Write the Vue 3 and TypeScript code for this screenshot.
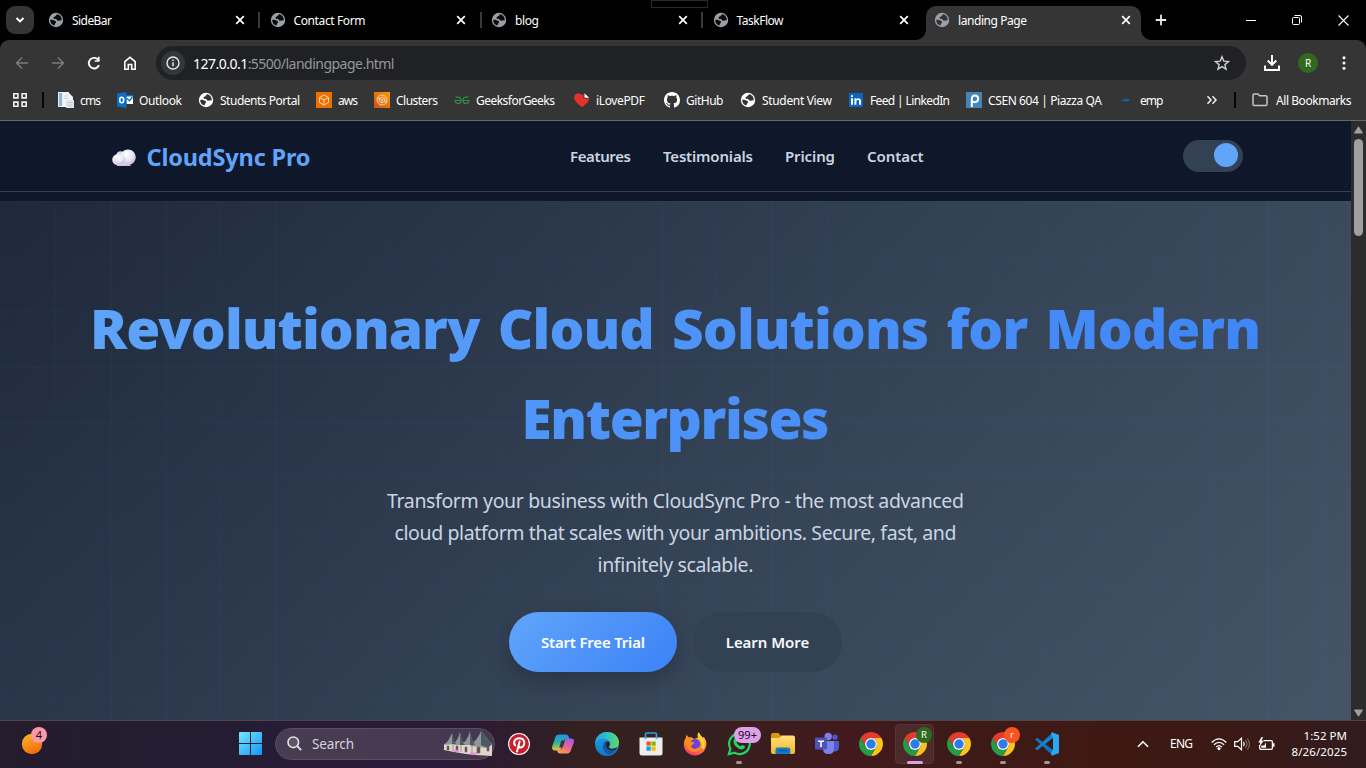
<script setup lang="ts">
import type { ObjectDirective } from 'vue'

// Spreads or tightens a label's tracking so it fills the given width.
const vFit: ObjectDirective<HTMLElement, number> = {
  mounted(el, { value }) {
    const count = (el.textContent ?? '').trim().length
    const natural = el.getBoundingClientRect().width
    const tracking = (value - natural) / Math.max(count - 1, 1)
    el.style.letterSpacing = `${tracking}px`
    el.style.marginRight = `${-tracking}px`
  },
}

interface Tab { title: string; width: number; active?: boolean }
interface Bookmark { label: string; icon: string; width: number }
interface App { name: string; icon: string; badge?: string; tone?: string; state?: string }

const tabs: Tab[] = [
  { title: 'SideBar', width: 40 },
  { title: 'Contact Form', width: 72 },
  { title: 'blog', width: 24 },
  { title: 'TaskFlow', width: 47 },
  { title: 'landing Page', width: 69, active: true },
]

const bookmarks: Bookmark[] = [
  { label: 'cms', icon: 'doc', width: 21 },
  { label: 'Outlook', icon: 'outlook', width: 43 },
  { label: 'Students Portal', icon: 'globe', width: 80 },
  { label: 'aws', icon: 'aws', width: 20 },
  { label: 'Clusters', icon: 'clusters', width: 42 },
  { label: 'GeeksforGeeks', icon: 'gfg', width: 79 },
  { label: 'iLovePDF', icon: 'heart', width: 49 },
  { label: 'GitHub', icon: 'github', width: 37.5 },
  { label: 'Student View', icon: 'globe', width: 70 },
  { label: 'Feed | LinkedIn', icon: 'linkedin', width: 80 },
  { label: 'CSEN 604 | Piazza QA', icon: 'piazza', width: 114 },
  { label: 'emp', icon: 'emp', width: 23.5 },
]

const links = [
  { label: 'Features', width: 61 },
  { label: 'Testimonials', width: 90 },
  { label: 'Pricing', width: 50 },
  { label: 'Contact', width: 56.5 },
]

const apps: App[] = [
  { name: 'Pinterest', icon: 'pinterest' },
  { name: 'Copilot', icon: 'copilot' },
  { name: 'Edge', icon: 'edge' },
  { name: 'Store', icon: 'store' },
  { name: 'Firefox', icon: 'firefox' },
  { name: 'WhatsApp', icon: 'whatsapp', badge: '99+', tone: 'count', state: 'open' },
  { name: 'Explorer', icon: 'explorer' },
  { name: 'Teams', icon: 'teams' },
  { name: 'Chrome', icon: 'chrome' },
  { name: 'Chrome R', icon: 'chrome', badge: 'R', tone: 'green', state: 'focused' },
  { name: 'Chrome 2', icon: 'chrome', state: 'open' },
  { name: 'Chrome r', icon: 'chrome', badge: 'r', tone: 'orange', state: 'open' },
  { name: 'VS Code', icon: 'vscode', state: 'open' },
]

const globeShape = (land: string, sea: string) =>
  `<svg viewBox="0 0 16 16"><circle cx="8" cy="8" r="7.2" fill="${land}"/><path fill="${sea}" d="M9.2 2.3C8 2.7 8.3 4 7 4.4 5.6 4.8 5.3 5.5 5.8 6.4 6.4 7.2 7.5 6.6 8.3 7.2 9 7.7 9 8.6 10 8.8 11 9 12 8.2 13.8 8.4 14 5.4 12 2.7 9.2 2.3zM2.2 7.8C3.8 7.3 5.6 8 7 8.8 8.3 9.5 8.4 10.6 7.4 11.2 6.7 11.6 7 12.6 6.4 13.5 3.8 12.8 2 10.6 2.2 7.8z"/></svg>`

const icons: Record<string, string> = {
  tabGlobe: globeShape('#9aa0a6', '#0b0b0b'),
  tabGlobeActive: globeShape('#9aa0a6', '#333'),
  globe: globeShape('#fff', '#333'),
  doc: '<svg viewBox="0 0 16 16"><path d="M0 0h11v15H0z" fill="#e8eef2"/><path d="M1 1h3v13H1z" fill="#8fb8d8"/><path d="M5 1h6l4 4v10H5z" fill="#f4f4f4"/><path d="M8 8h8v8H8z" fill="#dfe3ec"/><path d="M9.500 10.500h5M9.500 13h5M6 4h4M6 6.500h4" stroke="#c8ced8" fill="none"/></svg>',
  outlook: '<svg viewBox="0 0 16 16"><path d="M8 3h8v9H8z" fill="#0a6fc2"/><path d="M9.500 4.500h6.500v7.500H9.500z" fill="#fff"/><path d="M10 6.500l2.500 2.200L15.500 5" stroke="#0a6fc2" stroke-width="1.400" fill="none"/><path d="M0 1.500L9.500 0v16L0 14.500z" fill="#0a6fc2"/><ellipse cx="4.700" cy="8" rx="2" ry="2.700" fill="none" stroke="#fff" stroke-width="1.600"/></svg>',
  aws: '<svg viewBox="0 0 16 16"><path fill="#ed7100" d="M0 0h16v16H0z"/><path d="M8 3l4.500 2.500v5L8 13l-4.500-2.500v-5zM3.500 5.500L8 8l4.500-2.500M8 8v5" fill="none" stroke="#ffe2c5" stroke-width=".9"/></svg>',
  clusters: '<svg viewBox="0 0 16 16"><path fill="url(#clusterFill)" d="M0 0h16v16H0z"/><g fill="none" stroke="#ffe2c5" stroke-width=".9"><circle cx="8" cy="8" r="5"/><path d="M8 5l2.700 1.500v3L8 11 5.300 9.500v-3zM5.300 6.500L8 8l2.700-1.500M8 8v3M3.500 5.500l1.500 1M12.500 10.500L11 9.500"/></g></svg>',
  gfg: '<svg viewBox="0 0 16 16"><g fill="none" stroke="#2f8d46" stroke-width="1.200"><path d="M1.500 5.200h2.700c2.200 0 2.800 1.500 2.800 3 0 2-1.300 3.300-3 3.300-1.600 0-2.800-1.200-2.800-3h6.300M14.500 5.200h-2.700c-2.200 0-2.800 1.500-2.800 3 0 2 1.300 3.300 3 3.300 1.600 0 2.800-1.200 2.800-3H8"/></g></svg>',
  heart: '<svg viewBox="0 0 16 16"><path fill="#e5322d" d="M8 15.300C3 11.500.2 8.500.2 5.300.2 1.500 5.300 0 8 3.300L9.500 1.800V6.500h5.900C14.800 9.500 12 12.300 8 15.300z"/><path fill="#fff" d="M10.500 1.200l4.700 4.500h-4.700z"/></svg>',
  github: '<svg viewBox="0 0 16 16"><path fill="#fff" d="M8 0C3.580 0 0 3.580 0 8c0 3.540 2.290 6.530 5.470 7.590.4.070.55-.17.55-.38 0-.19-.01-.82-.01-1.490-2.010.37-2.530-.49-2.690-.94-.09-.23-.48-.94-.82-1.130-.28-.15-.68-.52-.01-.53.63-.01 1.080.58 1.230.82.72 1.210 1.870.87 2.330.66.07-.52.28-.87.51-1.070-1.780-.2-3.640-.89-3.640-3.950 0-.87.31-1.590.82-2.150-.08-.2-.36-1.020.08-2.120 0 0 .67-.21 2.200.82.64-.18 1.320-.27 2-.27s1.360.09 2 .27c1.530-1.040 2.200-.82 2.200-.82.44 1.100.16 1.920.08 2.120.51.56.82 1.270.82 2.150 0 3.070-1.870 3.750-3.650 3.950.29.25.54.73.54 1.480 0 1.070-.01 1.930-.01 2.200 0 .21.15.46.55.38A8 8 0 0 0 16 8c0-4.420-3.580-8-8-8z"/></svg>',
  linkedin: '<svg viewBox="0 0 16 16"><rect x="1" y="1" width="14" height="14" rx="1" fill="#0a66c2"/><path fill="#fff" d="M3 6.300h2v6.500H3zM3 3.200h2v1.900H3zM6.400 6.300h1.900v1c.9-1.600 4.700-1.700 4.700 1.600v3.900h-2V9.400c0-2-2.600-1.800-2.600 0v3.400h-2z"/></svg>',
  piazza: '<svg viewBox="0 0 16 16"><path fill="#4684b5" d="M0 0h16v16H0z"/><path d="M5.800 15V6.700c0-4.500 6.400-4 6.400 0s-5 4-6.200 2.400" fill="none" stroke="#fff" stroke-width="2"/></svg>',
  emp: '<svg viewBox="0 0 16 16"><path d="M4.500 7.300q3.500-1.500 7 0v1.700q-3.500 1-7 0z" fill="#1b4f80"/><path d="M5 8.300h6" stroke="#1a7fb5" stroke-width=".8"/></svg>',
  chrome: '<svg viewBox="0 0 24 24"><path fill="#e33b2e" d="M1.610 6A12 12 0 0 1 22.390 6L12 6A6 6 0 0 0 6.800 15Z"/><path fill="#fcc31e" transform="rotate(120 12 12)" d="M1.610 6A12 12 0 0 1 22.390 6L12 6A6 6 0 0 0 6.800 15Z"/><path fill="#259b48" transform="rotate(240 12 12)" d="M1.610 6A12 12 0 0 1 22.390 6L12 6A6 6 0 0 0 6.800 15Z"/><circle cx="12" cy="12" r="6" fill="#fff"/><circle cx="12" cy="12" r="4.700" fill="#2b7bea"/></svg>',
  pinterest: '<svg viewBox="0 0 24 24"><circle cx="12" cy="12" r="11" fill="#fff"/><circle cx="12" cy="12" r="9.900" fill="#c8202a"/><path d="M8.200 13.500C5.800 10.500 7.800 6.300 12.300 6.300c4.800 0 6 4.300 4.300 7.300-1.400 2.400-4.200 2.300-4.900.6M12.600 9.500L10 19.500" fill="none" stroke="#fff" stroke-width="2" stroke-linecap="round"/></svg>',
  copilot: '<svg viewBox="0 0 24 24"><path fill="url(#copA)" d="M8.500 2.500h6.300c1.600 0 2.600 1 3 2.500l.7 2h-2.500c-2 0-2.900 1-3.500 3l-2 6c-.5 1.700-1.600 2.500-3.200 2.500H4C1.500 18.500.5 17 1.200 14.600l3-9c.6-2 2-3.100 4.300-3.100z"/><path fill="url(#copB)" d="M15.500 21.500H9.200c-1.600 0-2.600-.8-3-2.500l-.4-1h2c2 0 3-1 3.600-3l2-6c.5-1.600 1.500-2.500 3.200-2.500H20c2.500 0 3.500 1.500 2.800 3.900l-3 8c-.6 2-2 3.100-4.300 3.100z"/><path fill="#33252b" d="M10.400 8.500h3.500l-2.300 7H8.200z" opacity=".85"/></svg>',
  edge: '<svg viewBox="0 0 24 24"><circle cx="12" cy="12" r="12" fill="url(#edgeB)"/><path fill="url(#edgeG)" d="M0 11C.8 4.500 5.800 0 12.200 0 19 0 24 4.800 24 10.600c0 3.700-2.700 6-5.900 6-2.400 0-4.100-.9-4.100-1.700 0-.5 1-1 1-3 0-3.100-3.100-5.300-6.700-5.300C4.500 6.600 1.500 8.500 0 11z"/><path fill="#0d5ba9" d="M8 14.500c0-3.200 2-5.200 4-5.700-2.200 2-1.500 8.300 4.500 8.900 2.400.2 4.300-.4 5.600-1.200C19.700 21 16 23 13.200 22.600 10 21.500 8 18 8 14.500z"/><path fill="#342421" d="M12.500 9c2 .3 2.700 1.700 2.500 3.200-.2 1.600-1.400 2.300-1 3.300.8 1.500 3.800 1.900 6.500.6 1.300-.5 1.900-.2 1.200.7-1 1.300-3.600 1.700-5.200 1.600-5.300-.2-7.600-6.600-4-9.400z"/></svg>',
  store: '<svg viewBox="0 0 24 24"><path d="M6.500 7V2.500Q6.500 1 8 1h8q1.500 0 1.500 1.500V7" fill="none" stroke="#22a5e8" stroke-width="1.700"/><path fill="#eeeeef" d="M.5 5.500h23V21q0 2.500-2.500 2.500H3Q.5 23.500.5 21z"/><path fill="#22a5e8" d="M5.700 5.500h1.700V7H5.700zM16.700 5.500h1.700V7h-1.700z"/><path fill="#f25022" d="M7.500 9.500h4.200v4.200H7.500z"/><path fill="#7fba00" d="M12.500 9.500h4.200v4.200h-4.200z"/><path fill="#00a4ef" d="M7.500 14.500h4.200v4.200H7.500z"/><path fill="#ffb900" d="M12.500 14.500h4.200v4.200h-4.200z"/></svg>',
  firefox: '<svg viewBox="0 0 24 24"><path fill="url(#foxA)" d="M3.500 2.700l2 2.500h3L11 7l4-1.500C14 3.500 14.500 1.500 16 .3c.8 2.700 2.500 3.700 4 5.700l.8-1.300C23 8 23.700 10.800 23.300 13.500 22.500 19.300 17.700 23.500 12 23.500 5.500 23.500.6 18.500.8 12 .9 9.600 1.700 7.300 2.700 6z"/><circle cx="12.300" cy="12" r="5" fill="#6f42d7"/><path fill="#ff8b1d" d="M2 8.500C4 5.500 7 5 9.500 7.500c-1.400.5-2 1.300-1.800 2.200l3.800.7c-.4 1.500-2.200 1.600-3.100 3.100-1 2 1 4.100 3.500 3.500C14 16.500 15 15 17 16c-1.500 4.500-9 5.200-12.500.5C2.700 14 1.800 11.300 2 8.500z"/><path d="M17 5.500q5 5 2.500 11" fill="none" stroke="#ffd43c" stroke-width="2.600"/></svg>',
  whatsapp: '<svg viewBox="0 0 24 24"><path d="M1.800 22.300l1.600-5.600A10.300 10.300 0 1 1 7.500 20.800z" fill="none" stroke="#22d366" stroke-width="2.200"/><path fill="#22d366" d="M8.200 6.200c.6-.3 1.200-.2 1.500.4l.9 2.100c.1.700-.7 1.300-1 1.700.9 1.900 2.200 3 4.100 3.800.6-.4 1-1.400 1.600-1.300l2.300 1.100c.8.500.1 2-.5 2.600-1.600 1.300-3.600.8-5.500-.2-2.400-1.300-4.300-3.400-5-5.700-.5-1.800.2-3.800 1.600-4.500z"/></svg>',
  explorer: '<svg viewBox="0 0 24 24"><path fill="#d99a05" d="M0 3q0-2 2-2h5.500l2 2.500V7H0z"/><path fill="url(#folder)" d="M0 6h8l2.500-2.500H22q2 0 2 2V20q0 2-2 2H2q-2 0-2-2z"/><path fill="#117bc9" d="M4.500 22v-4.500q0-2 2-2h10.800q2 0 2 2V22z"/><path d="M8 18.500h8" stroke="#075493" stroke-width="1.200"/></svg>',
  teams: '<svg viewBox="0 0 24 24"><circle cx="20" cy="5.200" r="2.600" fill="#5059c9"/><path fill="#5059c9" d="M16 9h7q1 0 1 1v5q0 4-4 4.500h-3z"/><circle cx="13.200" cy="4.500" r="3.700" fill="#7b83eb"/><path fill="#7b83eb" d="M8 9h11v7.500q0 5.500-5.500 5.500T8 16.500z"/><rect x="0" y="5.500" width="12" height="12" rx="1" fill="#4b53bc"/><path fill="#fff" d="M3 8.500h6v1.400H6.800v5H5.200v-5H3z"/></svg>',
  vscode: '<svg viewBox="0 0 24 24"><path fill="#0878c4" d="M0 7.200l2.300-1.500L18 18v5.700z"/><path fill="#147fca" d="M0 16.700l2.300 1.500L18 6V.3z"/><path fill="#2aa9f2" d="M17 .2L24 3v18l-7 2.800-1-1.500 2-5.300V6.500l-2-5z"/></svg>',
}
</script>

<template>
  <div class="desktop">
    <svg class="defs" width="0" height="0">
      <defs>
        <linearGradient id="clusterFill" x1="0" y1="1" x2="1" y2="0"><stop stop-color="#c8511b" /><stop offset="1" stop-color="#ff9900" /></linearGradient>
        <linearGradient id="copA" x1="0" y1="0" x2="0" y2="1"><stop stop-color="#1f93e8" /><stop offset=".5" stop-color="#2cb0a3" /><stop offset="1" stop-color="#e5c62a" /></linearGradient>
        <linearGradient id="copB" x1=".7" y1="0" x2=".3" y2="1"><stop stop-color="#9a5df0" /><stop offset=".5" stop-color="#ea618f" /><stop offset="1" stop-color="#ff9a55" /></linearGradient>
        <linearGradient id="edgeB" x1="0" y1="0" x2="0" y2="1"><stop stop-color="#1ca4dc" /><stop offset="1" stop-color="#1377cf" /></linearGradient>
        <linearGradient id="edgeG"><stop stop-color="#22a3e4" /><stop offset=".5" stop-color="#2fc1c8" /><stop offset="1" stop-color="#62d95c" /></linearGradient>
        <linearGradient id="foxA" x1=".8" y1="0" x2=".3" y2="1"><stop stop-color="#fff04a" /><stop offset=".4" stop-color="#ff9b22" /><stop offset="1" stop-color="#f7366b" /></linearGradient>
        <linearGradient id="folder" x1="0" y1="0" x2="0" y2="1"><stop stop-color="#ffe07a" /><stop offset="1" stop-color="#f5b92e" /></linearGradient>
        <linearGradient id="winA" x1="0" y1="0" x2="1" y2="1"><stop stop-color="#74e8fb" /><stop offset="1" stop-color="#1494f6" /></linearGradient>
        <radialGradient id="puff" cx=".4" cy=".3" r=".75"><stop stop-color="#ffffff" /><stop offset=".55" stop-color="#e9e6f2" /><stop offset="1" stop-color="#bdb3dc" /></radialGradient>
        <linearGradient id="orb" x1=".2" y1="0" x2=".6" y2="1"><stop stop-color="#f9b529" /><stop offset="1" stop-color="#f3690f" /></linearGradient>
      </defs>
    </svg>

    <section class="tabstrip">
      <span class="snap-handle"></span>
      <button class="tab-search">
        <svg width="10" height="8" viewBox="0 0 10 8"><path d="M1.500 2L5 5.500 8.500 2" fill="none" stroke="#fff" stroke-width="1.900" /></svg>
      </button>
      <div class="tabs">
        <div v-for="(tab, i) in tabs" :key="tab.title" class="tab" :class="{ active: tab.active, divided: i < 3 }">
          <span class="ico" v-html="tab.active ? icons.tabGlobeActive : icons.tabGlobe"></span>
          <span class="tab-title"><span v-fit="tab.width" class="label">{{ tab.title }}</span></span>
          <svg class="tab-close" width="10" height="10" viewBox="0 0 10 10"><path d="M1.200 1.200l7.600 7.600M8.800 1.200L1.200 8.800" stroke="#fff" stroke-width="1.700" /></svg>
        </div>
      </div>
      <svg class="plus" width="12" height="12" viewBox="0 0 12 12"><path d="M6 .8v10.400M.8 6h10.400" stroke="#e8e8e8" stroke-width="1.800" /></svg>
      <div class="window-controls">
        <svg width="10" height="10" viewBox="0 0 10 10"><path d="M0 5h10" stroke="#fff" shape-rendering="crispEdges" /></svg>
        <svg width="10" height="10" viewBox="0 0 10 10"><rect x=".5" y="2.500" width="7" height="7" rx="1" fill="none" stroke="#fff" /><path d="M2.500.5H8Q9.500.5 9.500 2v5.500" fill="none" stroke="#fff" /></svg>
        <svg width="11" height="11" viewBox="0 0 11 11"><path d="M.5.5l10 10M10.500.5l-10 10" stroke="#fff" stroke-width="1.100" /></svg>
      </div>
    </section>

    <section class="toolbar">
      <div class="address-row">
        <div class="nav-buttons">
          <svg width="14" height="14" viewBox="0 0 14 14"><path d="M13 7H1.800M7 1.500L1.500 7 7 12.500" fill="none" stroke="#7c7c7c" stroke-width="1.500" /></svg>
          <svg width="14" height="14" viewBox="0 0 14 14"><path d="M1 7h11.200M7 1.500L12.500 7 7 12.500" fill="none" stroke="#7c7c7c" stroke-width="1.500" /></svg>
          <svg width="14" height="14" viewBox="0 0 14 14"><path d="M12 9.200A5.300 5.300 0 1 1 11.500 4.200" fill="none" stroke="#fff" stroke-width="1.900" /><path d="M12.600.8v5H7.700V4.200h3.200V.8z" fill="#fff" /></svg>
          <svg width="14" height="14" viewBox="0 0 14 14"><path d="M1.800 13.200V5.600L7 1.300l5.200 4.300v7.600H8.700V8.500H5.300v4.700z" fill="none" stroke="#fff" stroke-width="1.600" /></svg>
        </div>
        <div class="omnibox">
          <span class="site-info">
            <svg width="14" height="14" viewBox="0 0 14 14"><circle cx="7" cy="7" r="6" fill="none" stroke="#e8e8e8" stroke-width="1.400" /><path d="M7 6.200v4M7 3.600v1.500" stroke="#e8e8e8" stroke-width="1.500" /></svg>
          </span>
          <span class="url"><span v-fit="201.500" class="label"><b>127.0.0.1</b>:5500/landingpage.html</span></span>
          <svg class="star" width="16" height="16" viewBox="0 0 16 16"><path d="M8 1.700l1.800 4.400 4.700.4-3.600 3.100 1.100 4.600L8 11.700l-4 2.500 1.100-4.600L1.500 6.500l4.700-.4z" fill="none" stroke="#d0d0d0" stroke-width="1.400" /></svg>
        </div>
        <div class="tools">
          <svg width="16" height="16" viewBox="0 0 16 16"><path d="M8 0v9.500M3.700 5.500L8 9.800l4.300-4.300M1 10.500V15h14v-4.500" fill="none" stroke="#fff" stroke-width="1.900" /></svg>
          <span class="avatar">R</span>
          <svg width="4" height="14" viewBox="0 0 4 14"><g fill="#fff"><circle cx="2" cy="1.800" r="1.500" /><circle cx="2" cy="7" r="1.500" /><circle cx="2" cy="12.200" r="1.500" /></g></svg>
        </div>
      </div>

      <div class="bookmark-bar">
        <svg class="apps-grid" width="14" height="14" viewBox="0 0 14 14"><path d="M.8.8h4.100v4.100H.8zM9.100.8h4.100v4.100H9.100zM.8 9.100h4.100v4.100H.8zM9.100 9.100h4.100v4.100H9.100z" fill="none" stroke="#eee" stroke-width="1.600" /></svg>
        <i class="rule"></i>
        <div class="bookmarks">
          <div v-for="b in bookmarks" :key="b.label" class="bookmark">
            <span class="ico" v-html="icons[b.icon]"></span>
            <span v-fit="b.width" class="label">{{ b.label }}</span>
          </div>
        </div>
        <svg class="more" width="12" height="10" viewBox="0 0 12 10"><path d="M1.500 1.200L5 5 1.500 8.800M6.500 1.200L10 5 6.500 8.800" fill="none" stroke="#eee" stroke-width="1.500" /></svg>
        <i class="rule"></i>
        <svg class="folder" width="16" height="14" viewBox="0 0 16 14"><path d="M1 11.200V2.300q0-1.300 1.300-1.300H6l1.700 1.800h6q1.300 0 1.300 1.300v7.100q0 1.300-1.300 1.300H2.300Q1 12.500 1 11.200z" fill="none" stroke="#c6c6c6" stroke-width="1.500" /></svg>
        <span v-fit="75.500" class="label">All Bookmarks</span>
      </div>
    </section>

    <div class="viewport">
      <main class="page">
        <header class="site-header">
          <div class="brand">
            <svg width="24" height="17" viewBox="0 0 24 17"><path d="M5 16.200h13.500" stroke="#c9bfe6" stroke-width="1.600" /><circle cx="8.500" cy="6.500" r="4.300" fill="#dedbe5" /><ellipse cx="6" cy="10.700" rx="5.800" ry="5.600" fill="url(#puff)" /><rect x="5" y="7" width="14" height="9" rx="4" fill="#dcd6ee" /><circle cx="16" cy="8.200" r="7.800" fill="url(#puff)" /><ellipse cx="8" cy="10.500" rx="5" ry="4.800" fill="url(#puff)" /></svg>
            <span v-fit="164" class="label">CloudSync Pro</span>
          </div>
          <nav class="links">
            <a v-for="l in links" :key="l.label" v-fit="l.width" class="label">{{ l.label }}</a>
          </nav>
          <div class="theme-toggle"><span></span></div>
        </header>
        <section class="hero">
          <h1>
            <span v-fit="1171" class="label">Revolutionary Cloud Solutions for Modern</span><br />
            <span v-fit="308" class="label">Enterprises</span>
          </h1>
          <p>
            <span v-fit="577" class="label">Transform your business with CloudSync Pro - the most advanced</span><br />
            <span v-fit="562" class="label">cloud platform that scales with your ambitions. Secure, fast, and</span><br />
            <span v-fit="156" class="label">infinitely scalable.</span>
          </p>
          <div class="actions">
            <button class="primary"><span v-fit="104" class="label">Start Free Trial</span></button>
            <button class="secondary"><span v-fit="83.500" class="label">Learn More</span></button>
          </div>
        </section>
      </main>
      <aside class="scrollbar">
        <svg width="9" height="8" viewBox="0 0 9 8"><path d="M4.500.8L8.500 7H.5z" fill="#9f9f9f" stroke="#9f9f9f" stroke-linejoin="round" /></svg>
        <span class="thumb"></span>
        <svg class="down" width="9" height="8" viewBox="0 0 9 8"><path d="M4.500 7.200L8.500 1H.5z" fill="#9f9f9f" stroke="#9f9f9f" stroke-linejoin="round" /></svg>
      </aside>
    </div>

    <footer class="taskbar">
      <div class="widget"><svg width="22" height="22" viewBox="0 0 22 22"><circle cx="11" cy="11" r="10.200" fill="url(#orb)" /></svg><span class="widget-badge">4</span></div>
      <svg class="start" width="23" height="23" viewBox="0 0 23 23"><path fill="url(#winA)" d="M1 0h10v11H0V1q0-1 1-1zM12 0h10q1 0 1 1v10H12zM0 12h11v11H1q-1 0-1-1zM12 12h11v10q0 1-1 1H12z" /></svg>
      <div class="search">
        <svg width="15" height="15" viewBox="0 0 15 15"><circle cx="6.300" cy="6.300" r="5.300" fill="#5f5661" stroke="#e6e2e6" stroke-width="1.600" /><path d="M10.200 10.200l4 4" stroke="#e6e2e6" stroke-width="1.900" /></svg>
        <span v-fit="42" class="label">Search</span>
        <svg class="trulli" width="48" height="26" viewBox="0 0 48 26">
          <path fill="#e2d5ca" d="M0 13l10-2h10l12 1 16 0v13l-16-1-10-1-12-2-10-2z" />
          <path d="M0 14Q5 10 8 2q1 7 4 11zM9 14q5-5 7-13 1 8 5 13zM18 14q6-6 8-14 1 8 5 14zM26 15Q34 8 37 0q3 3 11 13l-4 4z" fill="#8b979c" />
          <path d="M8 2q1 7 4 11H8zM16 1q1 8 5 13h-5zM26 0q1 8 5 14h-5zM37 0q3 3 11 13l-4 4-7-3z" fill="#4b5960" />
          <path d="M3 15h2v4H3zM12 15h2v4h-2zM21 16h2v5h-2zM33 16h3v6h-3zM43 16h2v4h-2zM9 14v6M17 14v7M28 14v9" stroke="#7d6a70" stroke-width=".6" fill="#5b4e55" />
          <path d="M10 20h5M26 22.500h7" stroke="#e78ed8" stroke-width="2.200" />
        </svg>
      </div>
      <div class="apps">
        <div v-for="app in apps" :key="app.name" class="app" :class="app.state">
          <span class="app-ico" v-html="icons[app.icon]"></span>
          <span v-if="app.badge" class="badge" :class="app.tone">{{ app.badge }}</span>
          <i v-if="app.state" class="indicator"></i>
        </div>
      </div>
      <div class="tray">
        <svg class="caret" width="12" height="8" viewBox="0 0 12 8"><path d="M1 6.800L6 1.800l5 5" fill="none" stroke="#fff" stroke-width="1.600" /></svg>
        <span v-fit="23" class="label lang">ENG</span>
        <svg class="wifi" width="16" height="14" viewBox="0 0 16 14"><g fill="none" stroke="#fff" stroke-width="1.300"><path d="M.7 5.500q7.300-7.200 14.600 0M2.900 7.800q5.100-4.900 10.200 0M5.100 10q2.900-2.700 5.800 0" /></g><circle cx="8" cy="11.600" r="1.600" fill="#fff" /></svg>
        <svg class="sound" width="17" height="14" viewBox="0 0 17 14"><path d="M.7 4.700h3L7.500 1.200v11.600L3.700 9.300h-3z" fill="none" stroke="#fff" stroke-width="1.200" /><path d="M9.500 4.800q1.500 2.200 0 4.400" fill="none" stroke="#fff" stroke-width="1.200" /><path d="M11.400 3.200q3 3.800 0 7.600M13.300 1.500q4.400 5.500 0 11" fill="none" stroke="#826562" stroke-width="1.200" /></svg>
        <svg class="battery" width="17" height="14" viewBox="0 0 17 14"><path d="M5.500 3.600H13q1.400 0 1.400 1.400v6q0 1.400-1.400 1.400H3Q1.600 12.400 1.600 11V8" fill="none" stroke="#fff" stroke-width="1.300" /><path d="M15 6.300h1.500v3.500H15zM3.300 8.500h3L8 5.300v5.500H3.300zM3.500 0L.3 5.500h2L1.500 9.500 5.700 3.800H3.600L5 0z" fill="#fff" /></svg>
        <div class="clock"><span v-fit="43.500" class="label">1:52 PM</span><span v-fit="55.500" class="label">8/26/2025</span></div>
      </div>
    </footer>
  </div>
</template>

<style>
html, body { margin: 0; overflow: hidden; background: #000; }
</style>

<style scoped>
* { box-sizing: border-box; }
.desktop { width: 1366px; height: 768px; display: flex; flex-direction: column; overflow: hidden; background: #000; color: #fff; font-family: "Noto Sans", "Open Sans", sans-serif; font-size: 12px; }
.defs { position: absolute; }
.label { display: inline-block; white-space: nowrap; }
svg { display: block; flex: none; }
button { border: 0; padding: 0; font: inherit; color: inherit; }
.ico { width: 16px; height: 16px; flex: none; }
.ico :deep(svg), .app-ico :deep(svg) { display: block; width: 100%; height: 100%; }

.tabstrip { height: 40px; flex: none; display: flex; align-items: center; padding-left: 6px; position: relative; }
.snap-handle { position: absolute; left: 651px; top: 0; width: 57px; height: 8px; border: 1px solid #2a2a2a; }
.tab-search { width: 28px; height: 28px; border-radius: 9px; background: #353535; display: grid; place-items: center; margin-right: 6px; }
.tabs { display: flex; align-self: flex-end; gap: 6.5px; }
.tab { width: 215px; height: 34px; padding: 0 10.500px 6px 8px; display: flex; align-items: center; position: relative; }
.tab-title { margin-left: 8px; flex: 1; }
.divided::after { content: ""; position: absolute; right: -5px; top: 6px; width: 2px; height: 16px; background: #3a3a3a; }
.tab.active { background: #353535; border-radius: 10px 10px 0 0; }
.tab.active::before, .tab.active::after { content: ""; position: absolute; bottom: 0; width: 10px; height: 10px; }
.tab.active::before { left: -10px; background: radial-gradient(circle at 0 0, #000 9.500px, #353535 10px); }
.tab.active::after { right: -10px; background: radial-gradient(circle at 100% 0, #000 9.500px, #353535 10px); }
.plus { margin-left: 14px; }
.window-controls { margin-left: auto; padding-right: 17px; display: flex; align-items: center; gap: 36px; }

.toolbar { height: 81px; flex: none; background: #353535; border-bottom: 1px solid #696867; border-radius: 9px 9px 0 0; }
.address-row { height: 46px; display: flex; align-items: center; }
.nav-buttons { width: 156px; padding-left: 15px; display: flex; gap: 22px; }
.omnibox { width: 1090px; height: 34px; border-radius: 17px; background: #202124; display: flex; align-items: center; padding: 0 16px 0 5px; }
.site-info { width: 24px; height: 24px; border-radius: 50%; background: #353638; display: grid; place-items: center; margin-right: 8px; }
.url { flex: 1; font-size: 14px; color: #969799; }
.url b { font-weight: 400; color: #fff; }
.tools { display: flex; align-items: center; padding-left: 18px; gap: 18px; }
.tools svg:last-child { margin-left: 6px; }
.avatar { width: 20px; height: 20px; border-radius: 50%; background: #33691e; display: grid; place-items: center; font-size: 10px; }
.bookmark-bar { height: 28px; display: flex; align-items: center; padding-left: 13px; }
.rule { width: 2px; height: 16px; background: #070707; }
.apps-grid { margin-right: 15px; }
.bookmarks { width: 1148px; padding-left: 14px; display: grid; grid-template-columns: 59px 81px 118px 58px 80px 120px 90px 76px 108px 118px 152px 60px; }
.bookmark { display: flex; align-items: center; gap: 6px; }
.more { margin: 0 16px 0 14px; }
.folder { margin: 0 8px 0 16px; }

.viewport { height: 599px; flex: none; display: flex; }
.page { width: 1351px; background: #0f172a; overflow: hidden; }
.site-header { height: 71px; border-bottom: 1px solid #334155; padding: 0 108px 0 112px; display: flex; align-items: center; justify-content: space-between; }
.brand { display: flex; align-items: center; gap: 10.500px; font-size: 23.500px; line-height: 36px; font-weight: 700; color: #60a5fa; padding-top: 2px; }
.links { display: flex; gap: 32px; font-size: 15px; font-weight: 600; color: #cbd5e1; }
.theme-toggle { width: 60px; height: 32px; border-radius: 16px; background: #334155; padding: 3px 5px; display: flex; justify-content: flex-end; }
.theme-toggle span { width: 24px; height: 24px; border-radius: 50%; background: #60a5fa; }
.hero { height: 551px; margin-top: 9px; padding: 80px 32px; text-align: center; background: repeating-linear-gradient(90deg, rgba(59, 130, 246, .03) 0 1.400px, transparent 1.400px 55.100px), repeating-linear-gradient(180deg, rgba(59, 130, 246, .03) 0 1.400px, transparent 1.400px 55.100px), linear-gradient(135deg, #1e293b 0%, #334155 50%, #475569 100%); }
h1 { margin: 0 auto 24px; padding-top: 2px; height: 179px; width: 1200px; font-size: 55px; line-height: 89.600px; font-weight: 900; word-spacing: 5px; color: transparent; background: linear-gradient(135deg, #60a5fa, #3b82f6); background-clip: text; -webkit-background-clip: text; }
p { margin: 0 0 31px; padding-top: 1px; font-size: 19.500px; line-height: 32px; color: #cbd5e1; }
h1 .label, p .label { vertical-align: top; }
.actions { display: flex; justify-content: center; gap: 16px; }
.actions button { height: 60px; border-radius: 30px; font-size: 15px; font-weight: 600; }
.primary { width: 168px; background: linear-gradient(135deg, #60a5fa, #3b82f6); box-shadow: 0 8px 22px rgba(0, 0, 0, .22); }
.secondary { width: 149px; background: #334155; color: #f8fafc; }
.scrollbar { width: 15px; background: #2c2c2c; display: flex; flex-direction: column; align-items: center; padding: 5px 0 3px; }
.thumb { width: 9px; height: 97px; margin-top: 5px; border-radius: 5px; background: #9f9f9f; }
.scrollbar .down { margin-top: auto; }

.taskbar { height: 48px; flex: none; display: flex; align-items: center; padding-bottom: 2px; border-top: 1px solid #50434a; background: linear-gradient(90deg, #251c2d 0, #221d31 180px, #2a1b38 330px, #2b1a38 450px, #33201f 590px, #34211f 680px, #421a1e 840px, #3d1a17 960px, #3f1914 1080px, #3b1914 1220px, #321c1e 1366px); }
.widget { position: relative; margin-left: 21px; }
.widget-badge { position: absolute; left: 10px; top: -6px; width: 16px; height: 16px; border-radius: 50%; background: #ff98a6; color: #111; font-size: 11px; display: grid; place-items: center; }
.start { margin-left: 196px; }
.search { width: 220px; height: 32px; margin-left: 13px; border-radius: 16px; border: 1px solid #5a4d61; background: linear-gradient(90deg, #473c51, #473751); padding: 0 2px 0 11px; display: flex; align-items: center; font-size: 13.500px; color: #d8d2da; }
.search .label { margin-left: 10px; }
.trulli { margin-left: auto; }
.apps { display: flex; margin-left: 2px; }
.app { width: 44px; height: 46px; display: grid; place-items: center; position: relative; }
.app-ico { width: 24px; height: 24px; }
.indicator { position: absolute; bottom: 3px; left: 19px; width: 6px; height: 3px; border-radius: 2px; background: #a29392; }
.focused::before { content: ""; position: absolute; inset: 3px 3px 3px 2px; border: 1px solid #59323a; border-radius: 4px; background: rgba(255, 255, 255, .07); }
.focused .app-ico { position: relative; }
.focused .indicator { left: 14px; width: 16px; background: #dc9ee9; }
.badge { position: absolute; top: 6px; left: 23px; width: 16px; height: 16px; border-radius: 8px; font-size: 9.500px; line-height: 16px; text-align: center; }
.badge.count { width: 27px; left: 17px; background: #df9fe9; color: #151015; font-size: 11px; }
.badge.green { background: #2f6a20; }
.badge.orange { background: #f9531f; }
.tray { flex: 1; display: flex; align-items: center; padding-right: 19px; }
.caret { margin-left: 68px; }
.lang { margin-left: 21px; }
.wifi { margin-left: 18px; }
.sound { margin-left: 7px; }
.battery { margin-left: 7px; }
.clock { margin-left: auto; display: flex; flex-direction: column; align-items: flex-end; line-height: 16px; font-size: 11.500px; }
</style>
